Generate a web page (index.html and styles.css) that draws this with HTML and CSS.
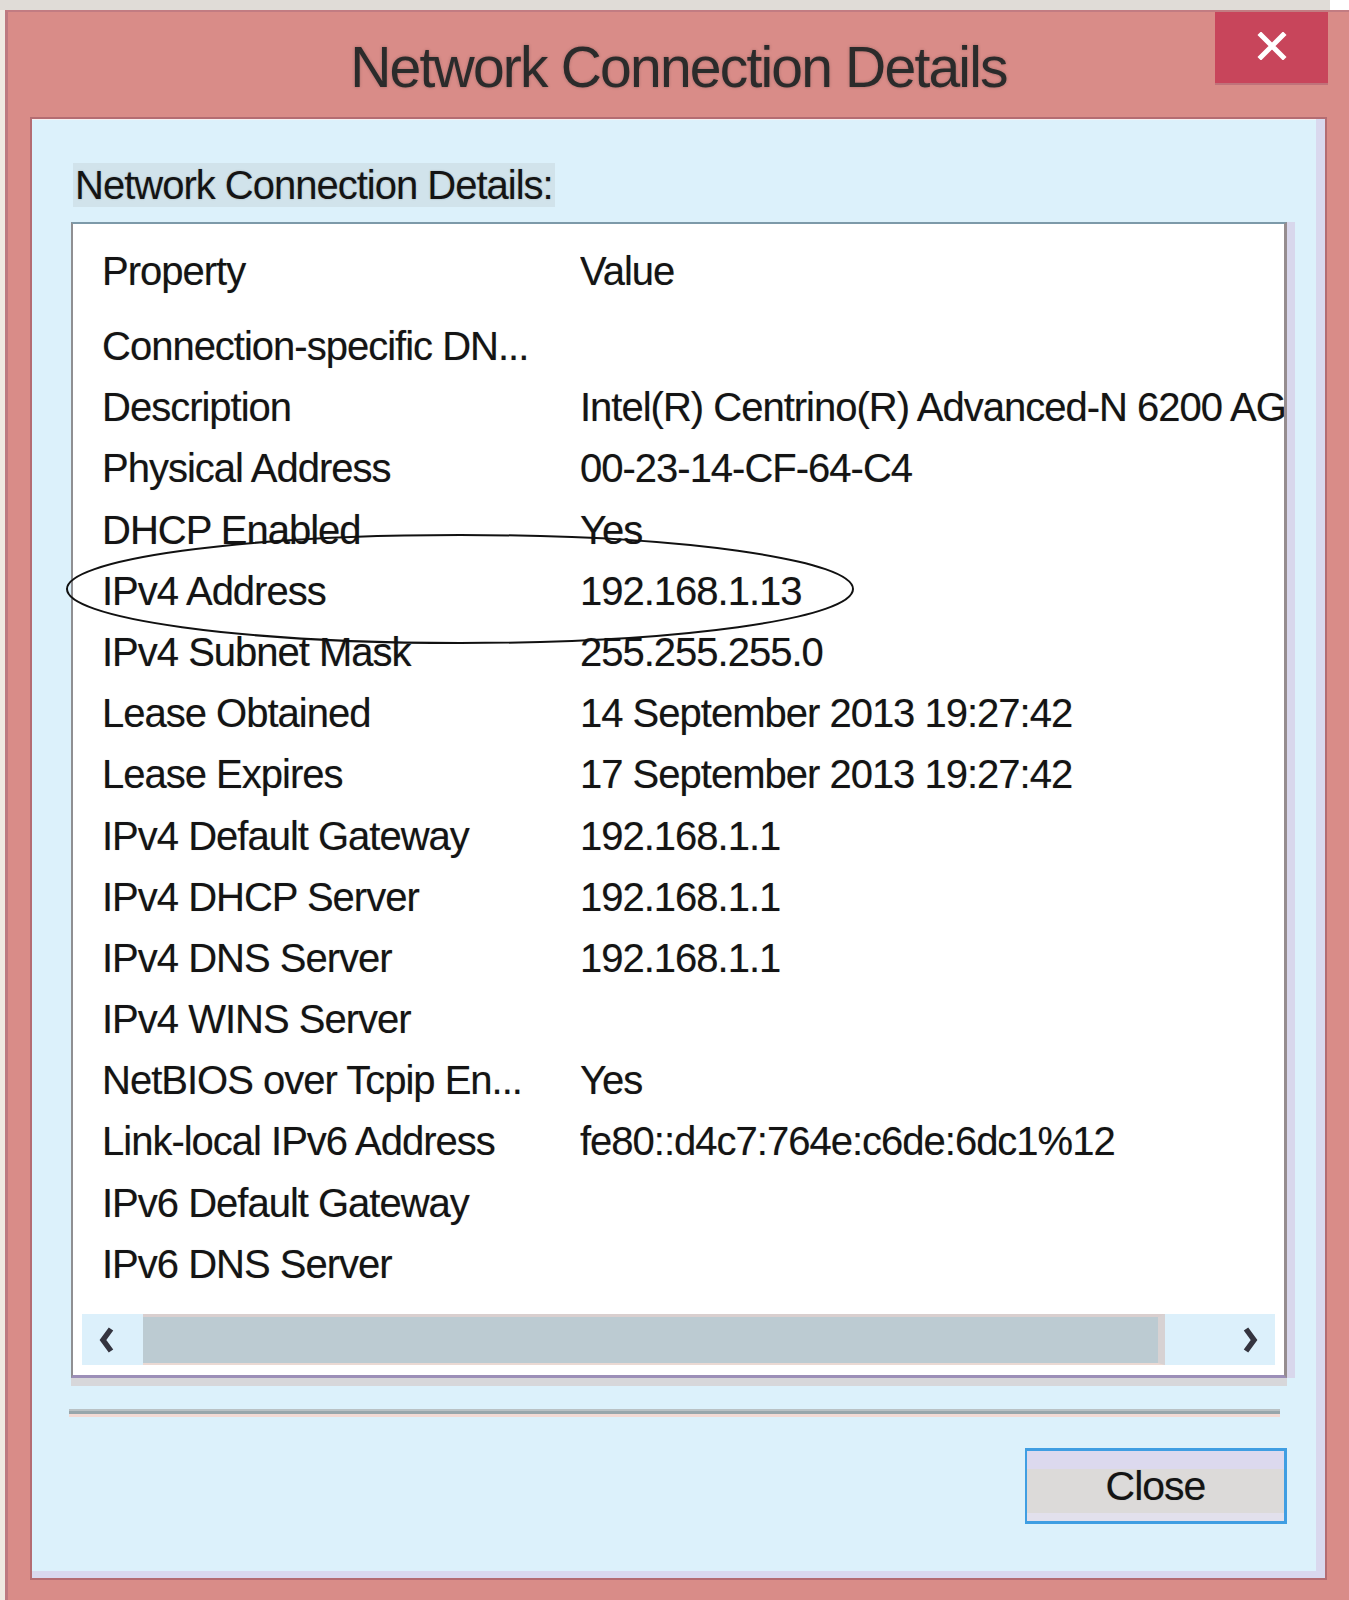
FILE: index.html
```html
<!DOCTYPE html>
<html lang="en">
<head>
<meta charset="utf-8">
<title>Network Connection Details</title>
<link rel="stylesheet" href="styles.css">
</head>
<body>
<div class="topstrip"><div class="grey"></div><div class="white"></div></div>
<div class="window">
  <div class="titlebar">
    <div class="spacer"></div>
    <div class="title">Network Connection Details</div>
    <div class="caption">
      <div class="close-x">
        <svg width="30" height="28" viewBox="0 0 30 28"><path d="M4 3 L26 25 M26 3 L4 25" stroke="#fff" stroke-width="5" stroke-linecap="square" fill="none"/></svg>
      </div>
    </div>
  </div>
  <div class="panel">
    <div class="label"><span>Network Connection Details:</span></div>
    <div class="list">
      <div class="row head"><div>Property</div><div>Value</div></div>
      <div class="rows">
        <div class="row"><div>Connection-specific DN...</div><div></div></div>
        <div class="row"><div>Description</div><div>Intel(R) Centrino(R) Advanced-N 6200 AGN</div></div>
        <div class="row"><div>Physical Address</div><div>00-23-14-CF-64-C4</div></div>
        <div class="row"><div>DHCP Enabled</div><div>Yes</div></div>
        <div class="row"><div>IPv4 Address</div><div>192.168.1.13</div></div>
        <div class="row"><div>IPv4 Subnet Mask</div><div>255.255.255.0</div></div>
        <div class="row"><div>Lease Obtained</div><div>14 September 2013 19:27:42</div></div>
        <div class="row"><div>Lease Expires</div><div>17 September 2013 19:27:42</div></div>
        <div class="row"><div>IPv4 Default Gateway</div><div>192.168.1.1</div></div>
        <div class="row"><div>IPv4 DHCP Server</div><div>192.168.1.1</div></div>
        <div class="row"><div>IPv4 DNS Server</div><div>192.168.1.1</div></div>
        <div class="row"><div>IPv4 WINS Server</div><div></div></div>
        <div class="row"><div>NetBIOS over Tcpip En...</div><div>Yes</div></div>
        <div class="row"><div>Link-local IPv6 Address</div><div>fe80::d4c7:764e:c6de:6dc1%12</div></div>
        <div class="row"><div>IPv6 Default Gateway</div><div></div></div>
        <div class="row"><div>IPv6 DNS Server</div><div></div></div>
      </div>
      <div class="hscroll">
        <div class="arrow left">
          <svg width="18" height="28" viewBox="0 0 18 28"><path d="M13 3 L5 14 L13 25" stroke="#34343f" stroke-width="5.5" fill="none"/></svg>
        </div>
        <div class="thumb"></div>
        <div class="arrow right">
          <svg width="18" height="28" viewBox="0 0 18 28"><path d="M5 3 L13 14 L5 25" stroke="#34343f" stroke-width="5.5" fill="none"/></svg>
        </div>
      </div>
      <svg class="circle" width="800" height="116" viewBox="0 0 800 116"><ellipse cx="400" cy="58" rx="393" ry="54" fill="none" stroke="#111" stroke-width="2"/></svg>
    </div>
    <div class="separator"></div>
    <div class="button">Close</div>
  </div>
</div>
</body>
</html>
```

FILE: styles.css
```css
html, body {
  margin: 0;
  padding: 0;
}
body {
  width: 1349px;
  height: 1600px;
  overflow: hidden;
  background: #efeae2;
  font-family: "Liberation Sans", Arial, sans-serif;
  color: #141414;
}
.topstrip {
  height: 10px;
  display: flex;
}
.topstrip .grey {
  flex: 1;
  background: #e0dcd7;
}
.topstrip .white {
  width: 19px;
  background: #ffffff;
}
.window {
  margin-left: 5px;
  height: 1590px;
  box-sizing: border-box;
  background: #d98c88;
  border-left: 3px solid #bd7a80;
  border-top: 2px solid #c27c82;
  padding-bottom: 20px;
  display: flex;
  flex-direction: column;
}
.titlebar {
  height: 105px;
  display: grid;
  grid-template-columns: 1fr auto 1fr;
}
.title {
  padding-top: 27px;
  font-size: 57px;
  line-height: 57px;
  letter-spacing: -1.8px;
  color: #2b2b2b;
  text-shadow: 0 0 3px rgba(60, 40, 40, 0.35);
  white-space: nowrap;
}
.caption {
  display: flex;
  justify-content: flex-end;
  align-items: flex-start;
}
.close-x {
  width: 113px;
  height: 71px;
  margin-right: 21px;
  background: #c8455b;
  display: flex;
  align-items: center;
  justify-content: center;
  box-shadow: 0 2px 0 #c0727a;
}
.close-x svg {
  margin-top: -4px;
}
.panel {
  margin: 0 22px;
  flex: 1;
  border: 2px solid #b46c72;
  background: #dcf1fb;
  box-shadow: inset -9px -7px 0 #d9d8ee, inset 0 1px 0 #f6f0f2;
  padding: 43px 38px 0 39px;
  display: flex;
  flex-direction: column;
}
.label {
  margin-left: 2px;
  font-size: 40px;
  line-height: 46px;
  letter-spacing: -1px;
  white-space: nowrap;
}
.label span {
  background: rgba(190, 200, 205, 0.35);
  padding: 0 2px;
  text-shadow: 0 0 2px rgba(0, 0, 0, 0.25);
}
.list {
  position: relative;
  margin-top: 14px;
  background: #ffffff;
  border-top: 2px solid #7d9aa9;
  border-left: 2px solid #8f8f92;
  border-right: 3px solid #968d8f;
  border-bottom: 3px solid #9c8fb8;
  box-shadow: 8px 0 0 #d8d7ec, 0 8px 0 #d7d7da;
  padding: 17px 0 10px 0;
}
.row {
  display: grid;
  grid-template-columns: 478px 1fr;
  padding-left: 29px;
  height: 61.2px;
  line-height: 61.2px;
  font-size: 40px;
  letter-spacing: -1px;
  white-space: nowrap;
  text-shadow: 0 0 1px rgba(0, 0, 0, 0.3);
}
.row > div {
  overflow: hidden;
}
.row.head {
  height: 61px;
  line-height: 61px;
  margin-bottom: 14px;
}
.rows {
  overflow: hidden;
}
.hscroll {
  margin: 19px 9px 0 9px;
  height: 51px;
  background: #dcf0fb;
  display: flex;
  align-items: stretch;
}
.arrow {
  width: 50px;
  display: flex;
  align-items: center;
  justify-content: center;
}
.thumb {
  width: 1015px;
  margin-left: 11px;
  background: #bccbd2;
  border-top: 3px solid #d9cfcf;
  border-bottom: 2px solid #ead9d3;
  border-right: 7px solid #d7d2d3;
}
.arrow.right {
  margin-left: auto;
}
.circle {
  position: absolute;
  left: -13px;
  top: 307px;
  pointer-events: none;
}
.separator {
  margin-top: 31px;
  margin-left: -2px;
  width: 1211px;
  height: 3px;
  background: #97a6ab;
  border-top: 2px solid #b9c1c4;
  border-bottom: 3px solid #f2dad4;
}
.button {
  align-self: flex-end;
  margin-top: 31px;
  width: 257px;
  height: 70px;
  border: 3px solid #3f9ee2;
  border-left-width: 2px;
  background: linear-gradient(#dcd9ee 0, #dcd9ee 26%, #dcdad9 26%, #dcdad9 88%, #e2e0ec 88%);
  font-size: 41px;
  line-height: 70px;
  letter-spacing: -1px;
  text-align: center;
  text-shadow: 0 0 1px rgba(0, 0, 0, 0.3);
}
```
